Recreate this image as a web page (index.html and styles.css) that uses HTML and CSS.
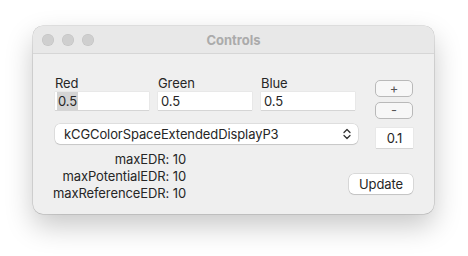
FILE: index.html
```html
<!DOCTYPE html>
<html lang="en">

<head>
  <meta charset="UTF-8">
  <title>Controls</title>
  <link rel="stylesheet" href="styles.css">
</head>

<body>
  <div class="window">
    <div class="titlebar">
      <div class="lights">
        <span class="light"></span>
        <span class="light"></span>
        <span class="light"></span>
      </div>
      <div class="title">Controls</div>
    </div>

    <div class="content">
      <div class="row row-colors">
        <div class="colors">
          <div class="channel">
            <div class="label">Red</div>
            <div class="field"><span class="selected">0.5</span></div>
          </div>
          <div class="channel">
            <div class="label">Green</div>
            <div class="field">0.5</div>
          </div>
          <div class="channel">
            <div class="label">Blue</div>
            <div class="field">0.5</div>
          </div>
        </div>
        <div class="stepper">
          <div class="btn small">+</div>
          <div class="btn small">-</div>
        </div>
      </div>

      <div class="row row-space">
        <div class="popup">
          <span>kCGColorSpaceExtendedDisplayP3</span>
          <svg class="chevron" width="8" height="12" viewBox="0 0 8 12">
            <polyline points="1,4.5 4,1.5 7,4.5" />
            <polyline points="1,7.5 4,10.5 7,7.5" />
          </svg>
        </div>
        <div class="field step">0.1</div>
      </div>

      <div class="row row-info">
        <div class="info">
          <div>maxEDR: 10</div>
          <div>maxPotentialEDR: 10</div>
          <div>maxReferenceEDR: 10</div>
        </div>
        <div class="btn update">Update</div>
      </div>
    </div>
  </div>
</body>

</html>
```

FILE: styles.css
```css
html {
  background: #ffffff;
}

body {
  margin: 0;
  padding: 26px 0 0 33px;
  min-height: 100vh;
  box-sizing: border-box;
  background: #ffffff;
  font-family: Inter, "Noto Sans", sans-serif;
  font-size: 13px;
  letter-spacing: -0.1px;
  color: #262626;
}

.window {
  width: 401px;
  height: 188px;
  background: #efefef;
  border-radius: 10px;
  box-shadow: 0 0 0 0.5px rgba(0, 0, 0, 0.2), 0 12px 28px rgba(0, 0, 0, 0.22);
  overflow: hidden;
  box-sizing: border-box;
}

.titlebar {
  height: 27px;
  background: #e8e8e8;
  border-bottom: 1px solid #d6d6d6;
  display: flex;
  align-items: center;
  position: relative;
}

.lights {
  display: flex;
  gap: 8px;
  padding-left: 9px;
}

.light {
  width: 12px;
  height: 12px;
  border-radius: 50%;
  background: #cfcfcf;
  box-shadow: inset 0 0 0 0.5px rgba(0, 0, 0, 0.08);
}

.title {
  position: absolute;
  left: 0;
  right: 0;
  text-align: center;
  font-weight: 700;
  letter-spacing: 0;
  color: #ababab;
}

.content {
  padding: 21px 21px 0 22px;
}

.row {
  display: flex;
  justify-content: space-between;
  align-items: flex-start;
}

.colors {
  display: flex;
  gap: 9px;
}

.channel {
  width: 94px;
}

.label {
  line-height: 16px;
  margin-bottom: 1px;
}

.field {
  height: 18px;
  line-height: 18px;
  background: #ffffff;
  padding-left: 3px;
  box-shadow: 0 0 0 0.5px rgba(0, 0, 0, 0.06), 0 1px 0 rgba(0, 0, 0, 0.08);
}

.selected {
  background: #d4d4d4;
  padding: 1px 1px;
  margin-left: -1px;
}

.stepper {
  display: flex;
  flex-direction: column;
  gap: 5px;
  margin-top: 5px;
}

.btn {
  background: #f7f7f7;
  border-radius: 5px;
  text-align: center;
  box-sizing: border-box;
}

.btn.small {
  width: 38px;
  height: 17px;
  line-height: 15px;
  border: 1px solid #b9b9b9;
  color: #555555;
}

.row-space {
  margin-top: 5px;
}

.popup {
  width: 303px;
  height: 20px;
  background: #ffffff;
  border-radius: 5px;
  box-shadow: 0 0 0 0.5px rgba(0, 0, 0, 0.14), 0 1px 1px rgba(0, 0, 0, 0.1);
  display: flex;
  justify-content: space-between;
  align-items: center;
  padding: 0 7px 0 9px;
  box-sizing: border-box;
}

.chevron polyline {
  fill: none;
  stroke: #333333;
  stroke-width: 1.3;
  stroke-linecap: round;
  stroke-linejoin: round;
}

.field.step {
  width: 37px;
  height: 20px;
  line-height: 20px;
  margin-top: 4px;
  padding-left: 0;
  text-align: center;
  box-sizing: border-box;
}

.row-info {
  margin-top: 3px;
}

.info {
  text-align: right;
  line-height: 17px;
  margin-left: -2px;
}

.btn.update {
  width: 64px;
  height: 20px;
  line-height: 20px;
  margin-top: 23px;
  background: #ffffff;
  box-shadow: 0 0 0 0.5px rgba(0, 0, 0, 0.18), 0 1px 1px rgba(0, 0, 0, 0.1);
}
```
